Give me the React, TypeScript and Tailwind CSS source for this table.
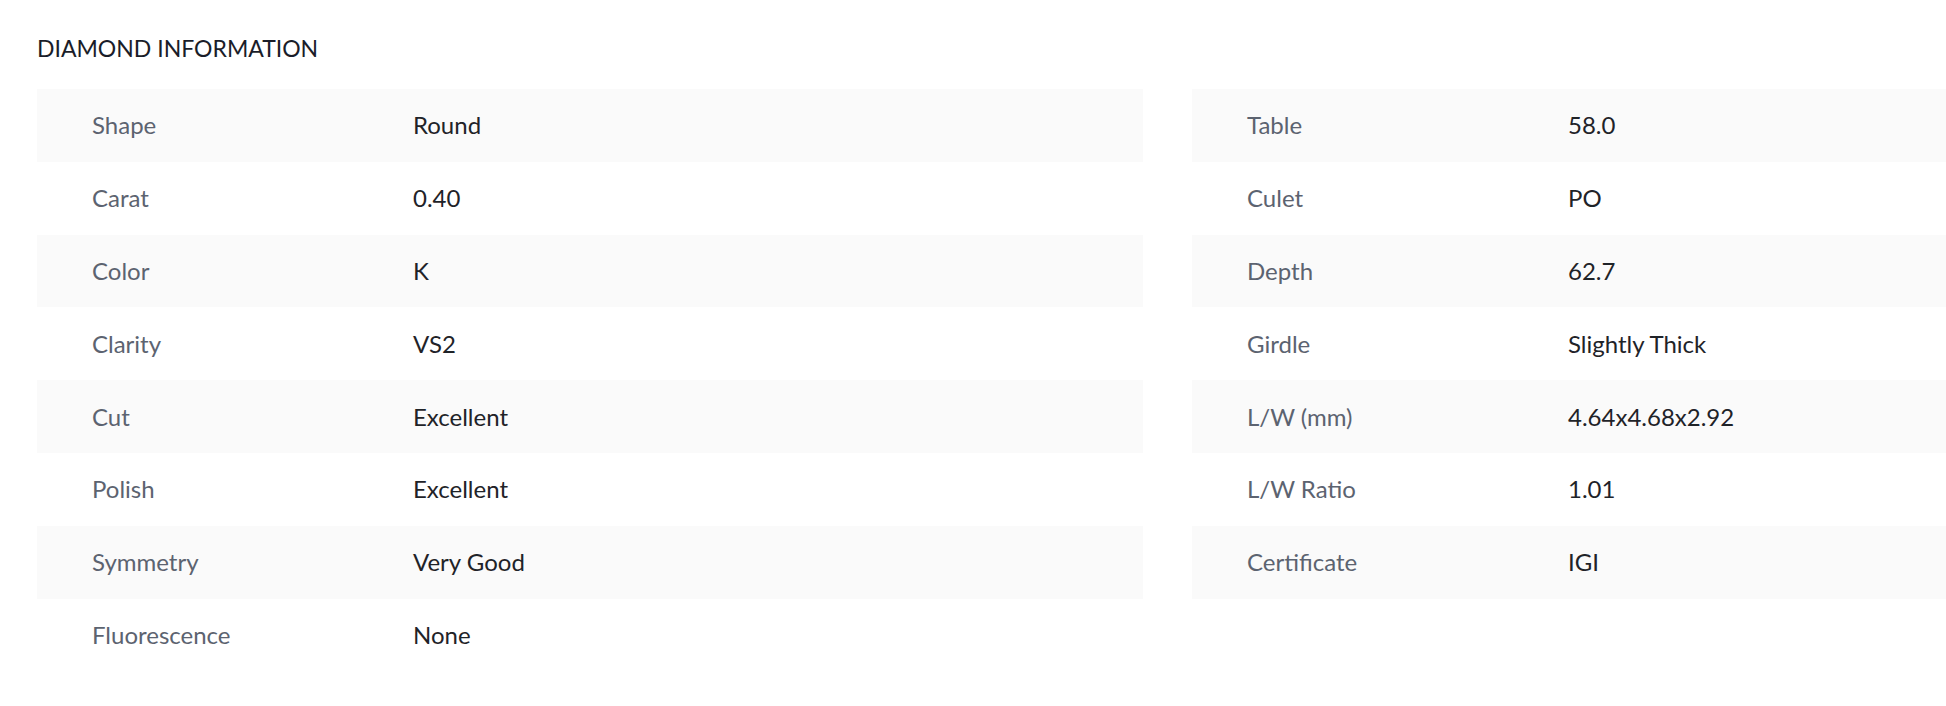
const left: [string, string][] = [
  ['Shape', 'Round'],
  ['Carat', '0.40'],
  ['Color', 'K'],
  ['Clarity', 'VS2'],
  ['Cut', 'Excellent'],
  ['Polish', 'Excellent'],
  ['Symmetry', 'Very Good'],
  ['Fluorescence', 'None'],
];

const right: [string, string][] = [
  ['Table', '58.0'],
  ['Culet', 'PO'],
  ['Depth', '62.7'],
  ['Girdle', 'Slightly Thick'],
  ['L/W (mm)', '4.64x4.68x2.92'],
  ['L/W Ratio', '1.01'],
  ['Certificate', 'IGI'],
];

const SpecList = ({ rows }: { rows: [string, string][] }) => (
  <div className="flex flex-col">
    {rows.map(([label, value], i) => (
      <div
        key={label}
        className={`flex items-center h-[72.8px] pl-[55px] ${i % 2 === 0 ? 'bg-[#fafafa]' : 'bg-white'}`}
      >
        <span className="w-[321px] shrink-0 text-[#5c6370]">{label}</span>
        <span className="text-[#1f2328]">{value}</span>
      </div>
    ))}
  </div>
);

export default function App() {
  return (
    <div className="w-full h-[706px] overflow-hidden bg-white pl-[37px] pt-[28px] font-['Lato','Noto_Sans',sans-serif] text-[24px]">
      <h2 className="text-[23px] leading-[40px] text-[#1a1d29] uppercase tracking-normal">Diamond Information</h2>
      <div className="grid grid-cols-[1106px_1106px] gap-x-[49px] mt-[21px]">
        <SpecList rows={left} />
        <SpecList rows={right} />
      </div>
    </div>
  );
}
